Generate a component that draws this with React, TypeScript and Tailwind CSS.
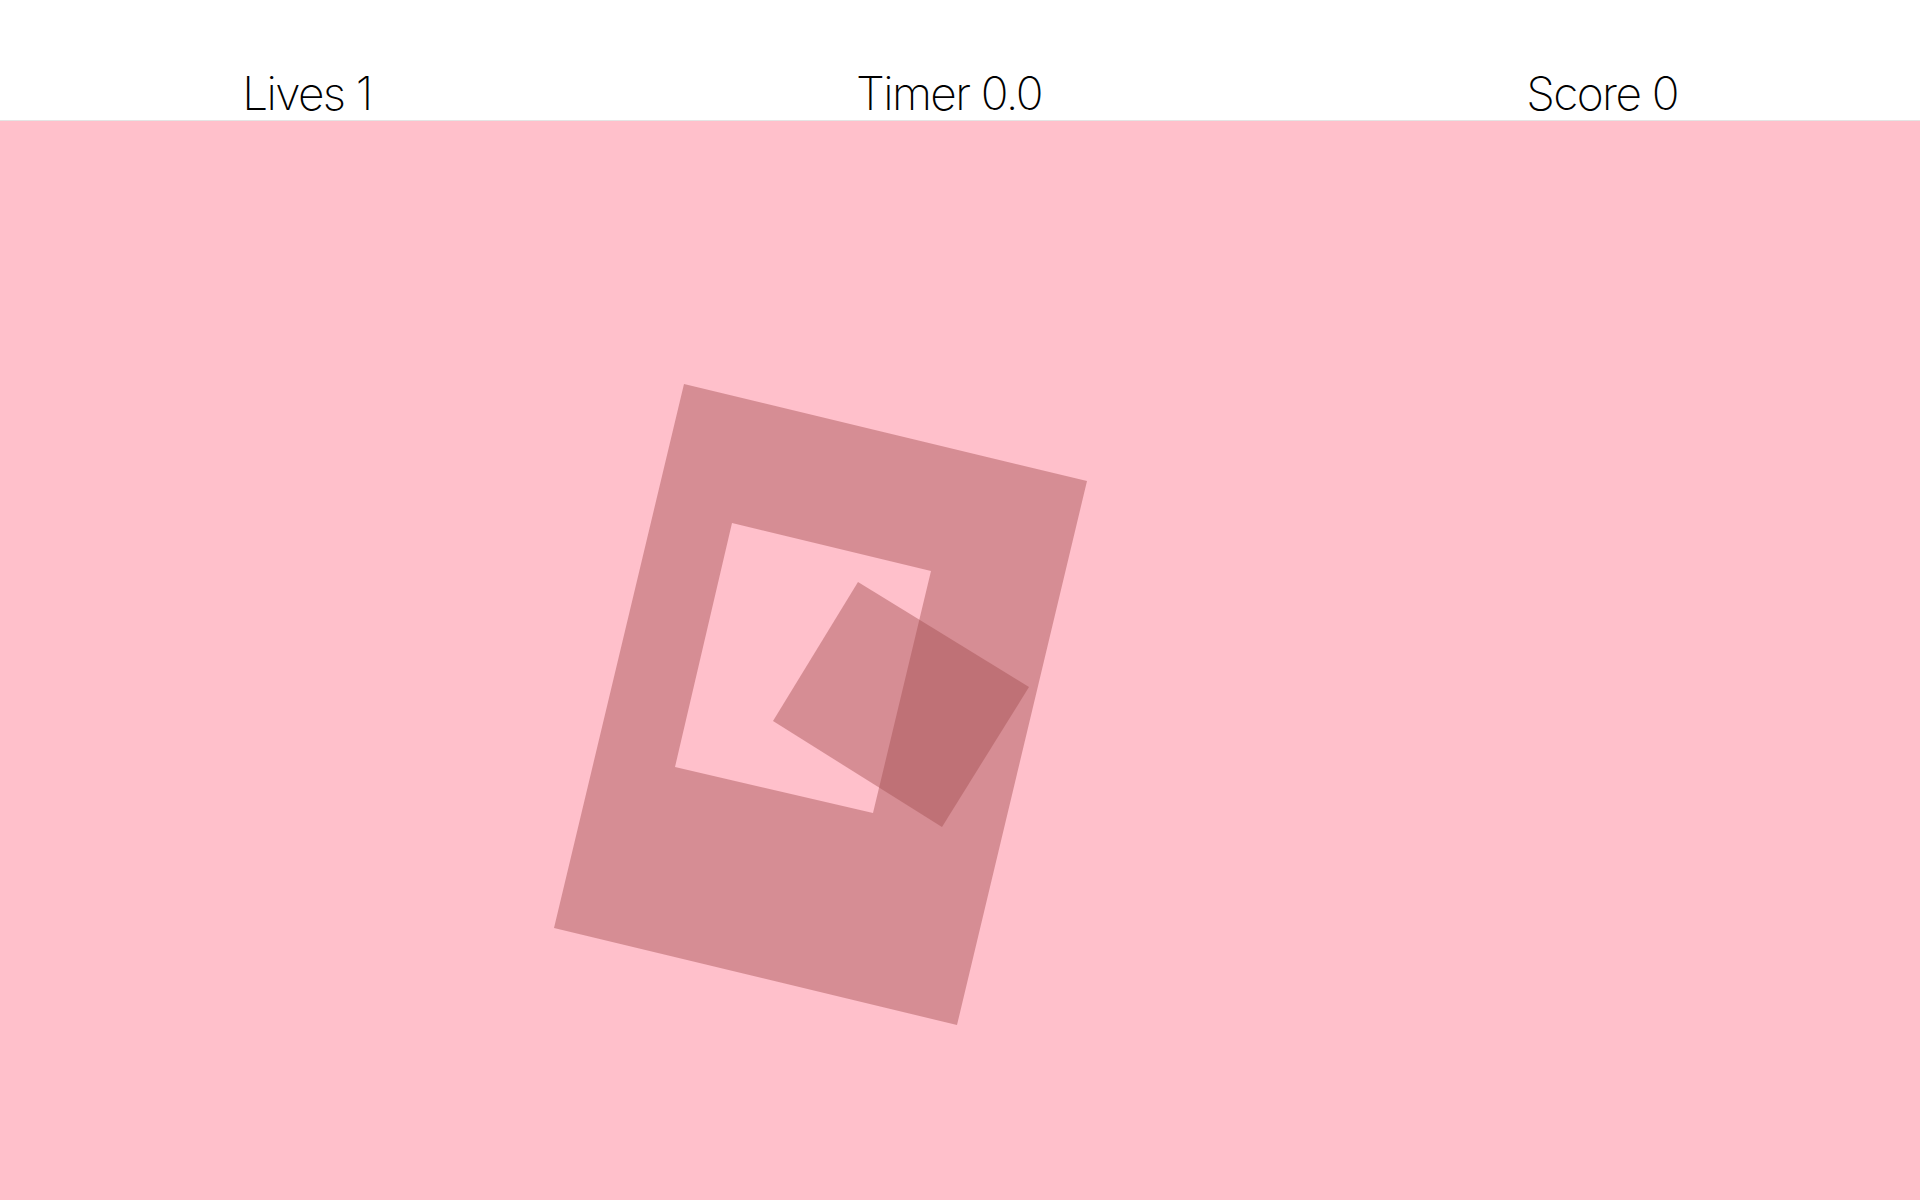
const HUD = [
  { label: 'Lives', value: '1' },
  { label: 'Timer', value: '0.0' },
  { label: 'Score', value: '0' },
]

// frame with a square hole, plus the falling piece (page coords)
const FRAME_OUTER = '684,384 1087,481 957,1025 554,928'
const FRAME_HOLE = '732,523 931,571 873,813 675,767'
const PIECE = '858,582 1029,687 942,827 773,721'

export default function App() {
  return (
    <div className="flex h-screen w-full flex-col overflow-hidden bg-white">
      <header className="flex h-[121px] shrink-0 items-end justify-around border-b border-[#e4e4e4] bg-white pb-0">
        {HUD.map((item) => (
          <div
            key={item.label}
            className="font-['Inter','Lato',sans-serif] text-[46px] leading-[54px] font-extralight tracking-[-0.035em] text-black"
          >
            {item.label} {item.value}
          </div>
        ))}
      </header>

      <main className="relative flex-1 bg-[#ffc0cb]">
        <svg
          className="absolute inset-0 h-full w-full"
          viewBox="0 121 1920 1079"
          preserveAspectRatio="xMinYMin slice"
          aria-hidden="true"
        >
          <path
            d={`M${FRAME_OUTER.split(' ').join(' L')} Z M${FRAME_HOLE.split(' ').join(' L')} Z`}
            fill="rgb(164,80,82)"
            fillOpacity="0.45"
            fillRule="evenodd"
          />
          <polygon points={PIECE} fill="rgb(164,80,82)" fillOpacity="0.45" />
        </svg>
      </main>
    </div>
  )
}
